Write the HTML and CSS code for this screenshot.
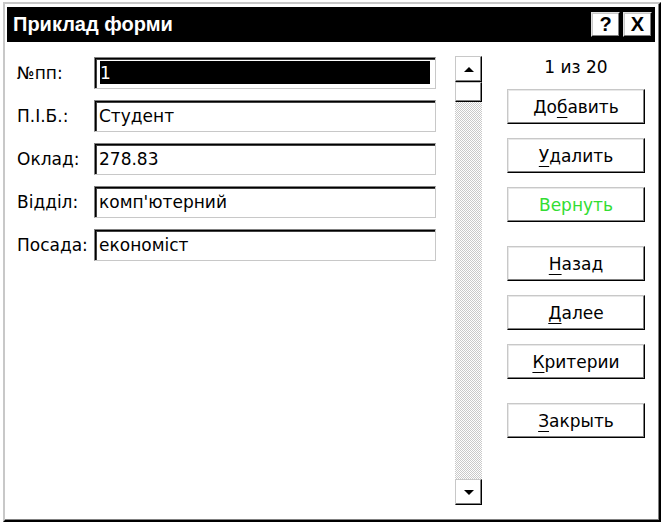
FILE: index.html
```html
<!DOCTYPE html>
<html lang="uk">
<head>
    <meta charset="UTF-8">
    <title>Приклад форми</title>
    <link rel="stylesheet" href="styles.css">
</head>
<body>
    <div class="dialog">
        <div class="titlebar">
            <span class="title">Приклад форми</span>
            <div class="caption-btns">
                <span class="cap-btn">?</span>
                <span class="cap-btn">X</span>
            </div>
        </div>
        <div class="content">
            <div class="fields">
                <div class="row"><label>№пп:</label><div class="field selected"><span>1</span></div></div>
                <div class="row"><label>П.І.Б.:</label><div class="field">Студент</div></div>
                <div class="row"><label>Оклад:</label><div class="field">278.83</div></div>
                <div class="row"><label>Відділ:</label><div class="field">комп'ютерний</div></div>
                <div class="row"><label>Посада:</label><div class="field">економіст</div></div>
            </div>
            <div class="scrollbar">
                <div class="sb-btn"><span class="tri-up"></span></div>
                <div class="sb-thumb"></div>
                <div class="sb-track"></div>
                <div class="sb-btn"><span class="tri-down"></span></div>
            </div>
            <div class="side">
                <div class="counter">1 из 20</div>
                <button>До<u>б</u>авить</button>
                <button><u>У</u>далить</button>
                <button class="disabled">Вернуть</button>
                <button class="spaced"><u>Н</u>азад</button>
                <button><u>Д</u>алее</button>
                <button><u>К</u>ритерии</button>
                <button class="spaced"><u>З</u>акрыть</button>
            </div>
        </div>
    </div>
</body>
</html>
```
FILE: styles.css
```css
* {
    box-sizing: border-box;
}
body {
    margin: 0;
    background-color: #fff;
    font-family: "DejaVu Sans", sans-serif;
    font-size: 17px;
    color: #000;
}
.dialog {
    margin: 2px 0 0 3px;
    width: 658px;
    height: 520px;
    border: 2px solid;
    border-color: #c8c8c8 #000 #000 #c8c8c8;
    box-shadow: inset -1px -1px 0 #808080;
    padding: 3px 4px 3px 2px;
    display: flex;
    flex-direction: column;
}
.titlebar {
    height: 35px;
    background-color: #000;
    color: #fff;
    display: flex;
    align-items: center;
    justify-content: space-between;
    padding: 0 3px 0 6px;
}
.title {
    font-family: "Liberation Sans", Arial, sans-serif;
    font-weight: bold;
    font-size: 20px;
}
.caption-btns {
    display: flex;
    gap: 3px;
}
.cap-btn {
    width: 29px;
    height: 25px;
    background-color: #fff;
    color: #000;
    border: 1px solid;
    border-color: #e0e0e0 #000 #000 #e0e0e0;
    box-shadow: inset -1px -1px 0 #808080, inset 1px 1px 0 #c8c8c8;
    font-family: "Liberation Sans", Arial, sans-serif;
    font-weight: bold;
    font-size: 20px;
    line-height: 22px;
    text-align: center;
}
.content {
    display: flex;
    padding: 14px 0 0 10px;
}
.fields {
    width: 419px;
    display: flex;
    flex-direction: column;
    gap: 11px;
    padding-top: 1px;
}
.row {
    display: flex;
    align-items: center;
    height: 32px;
}
.row label {
    width: 77px;
}
.field {
    width: 342px;
    height: 32px;
    border: 1px solid;
    border-color: #808080 #c8c8c8 #c8c8c8 #808080;
    box-shadow: inset 1px 1px 0 #000, inset 2px 2px 0 #404040;
    padding: 0 4px;
    display: flex;
    align-items: center;
}
.field.selected {
    padding: 3px 5px 4px 5px;
}
.field.selected span {
    flex: 1;
    height: 100%;
    background-color: #000;
    color: #fff;
    display: flex;
    align-items: center;
}
.scrollbar {
    margin-left: 19px;
    width: 27px;
    height: 449px;
    display: flex;
    flex-direction: column;
}
.sb-btn,
.sb-thumb {
    background-color: #fff;
    border: 1px solid;
    border-color: #c8c8c8 #000 #000 #c8c8c8;
    box-shadow: inset -1px -1px 0 #808080;
    display: flex;
    align-items: center;
    justify-content: center;
}
.sb-btn {
    height: 26px;
}
.sb-thumb {
    height: 20px;
}
.sb-track {
    flex: 1;
    background: repeating-conic-gradient(#cacaca 0 25%, #fff 0 50%) 0 0 / 2px 2px;
}
.tri-up {
    border-left: 5px solid transparent;
    border-right: 5px solid transparent;
    border-bottom: 5px solid #000;
}
.tri-down {
    border-left: 5px solid transparent;
    border-right: 5px solid transparent;
    border-top: 5px solid #000;
}
.side {
    margin-left: 25px;
    width: 138px;
    display: flex;
    flex-direction: column;
    gap: 14px;
}
.counter {
    height: 22px;
    line-height: 22px;
    text-align: center;
    margin-bottom: -3px;
}
.side button {
    height: 35px;
    background-color: #fff;
    border: 1px solid;
    border-color: #c8c8c8 #000 #000 #c8c8c8;
    box-shadow: inset -1px -1px 0 #808080, inset 1px 1px 0 #e8e8e8;
    font-family: "DejaVu Sans", sans-serif;
    font-size: 17px;
    color: #000;
    padding: 0;
}
.side button u {
    text-underline-offset: 4px;
}
.side button.disabled {
    color: #33dd33;
}
.side button.spaced {
    margin-top: 10px;
}
```
